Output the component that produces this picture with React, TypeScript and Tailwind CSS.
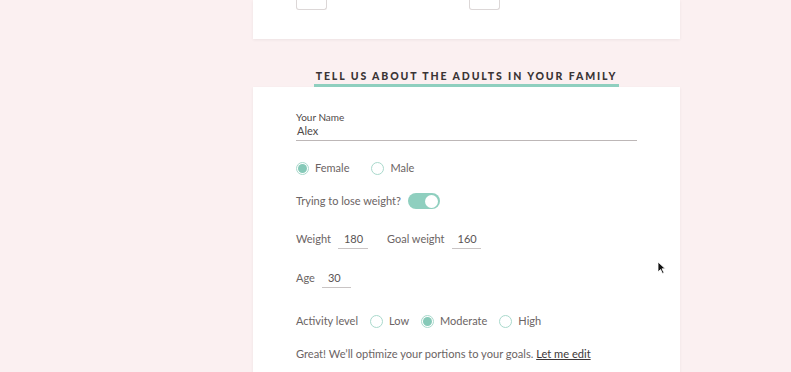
import React from "react";

const font = { fontFamily: "Lato, 'Open Sans', Arial, sans-serif" };

function Radio({ checked, label }: { checked?: boolean; label: string }) {
  return (
    <div className="flex items-center gap-[6px]">
      <span className="w-[13px] h-[13px] rounded-full border border-[#a9d9cc] bg-white flex items-center justify-center">
        {checked && <span className="w-[9px] h-[9px] rounded-full bg-[#86c9b8]" />}
      </span>
      <span className="leading-[14px]">{label}</span>
    </div>
  );
}

function SmallInput({ value, w }: { value: string; w: string }) {
  return (
    <div className={`${w} border-b border-[#c9c4c4] pb-[2px] pl-[6px] leading-[14px] text-[#5a5454]`}>{value}</div>
  );
}

export default function App() {
  return (
    <div style={font} className="relative h-[372px] w-[791px] overflow-hidden bg-[#fbf0f1] text-[11px] text-[#6b6464]">
      {/* previous card */}
      <div className="ml-[253px] w-[427px] h-[39px] bg-white shadow-[0_1px_3px_rgba(0,0,0,0.06)] flex pl-[43px]">
        <div className="w-[31px] h-[10px] border border-t-0 border-[#dcd7d7] rounded-b-[3px]" />
        <div className="ml-[142px] w-[31px] h-[10px] border border-t-0 border-[#dcd7d7] rounded-b-[3px]" />
      </div>

      {/* heading */}
      <div className="ml-[253px] w-[427px] flex justify-center mt-[31px]">
        <div className="border-b-[3px] border-[#8fcfbf] px-[2px] pb-[2px]">
          <h2 className="text-[10.5px] leading-[12px] font-black tracking-[0.18em] text-[#3a3435] whitespace-nowrap">
            TELL US ABOUT THE ADULTS IN YOUR FAMILY
          </h2>
        </div>
      </div>

      {/* form card */}
      <div className="ml-[253px] w-[427px] h-[300px] bg-white shadow-[0_1px_3px_rgba(0,0,0,0.06)] px-[43px] pt-[24px] flex flex-col">
        <div className="text-[10px] leading-[12px] text-[#4f4949]">Your Name</div>
        <div className="mt-[1px] border-b border-[#bdb7b7] pb-[2px] leading-[14px] text-[#4f4949] pl-[1px]">Alex</div>

        <div className="mt-[20px] flex items-center gap-[22px]">
          <Radio checked label="Female" />
          <Radio label="Male" />
        </div>

        <div className="mt-[18px] flex items-center gap-[7px]">
          <span className="leading-[14px]">Trying to lose weight?</span>
          <span className="w-[32px] h-[16px] rounded-full bg-[#8fcfbf] flex items-center justify-end pr-[2px]">
            <span className="w-[13px] h-[13px] rounded-full bg-white" />
          </span>
        </div>

        <div className="mt-[23px] flex items-start">
          <span className="leading-[14px]">Weight</span>
          <div className="ml-[7px]">
            <SmallInput value="180" w="w-[30px]" />
          </div>
          <span className="ml-[19px] leading-[14px]">Goal weight</span>
          <div className="ml-[7px]">
            <SmallInput value="160" w="w-[29px]" />
          </div>
        </div>

        <div className="mt-[22px] flex items-start">
          <span className="leading-[14px]">Age</span>
          <div className="ml-[7px]">
            <SmallInput value="30" w="w-[29px]" />
          </div>
        </div>

        <div className="mt-[26px] flex items-center gap-[12px]">
          <span className="leading-[14px]">Activity level</span>
          <Radio label="Low" />
          <Radio checked label="Moderate" />
          <Radio label="High" />
        </div>

        <div className="mt-[19px] leading-[14px] text-[11.1px]">
          Great! We’ll optimize your portions to your goals.{" "}
          <span className="underline text-[#3d3838]">Let me edit</span>
        </div>
      </div>

      {/* mouse cursor */}
      <svg className="absolute left-[657px] top-[261px]" width="9" height="13" viewBox="0 0 9 13">
        <path d="M1 1 L1 11 L3.5 8.5 L5.5 12.5 L7 11.8 L5 7.8 L8.3 7.8 Z" fill="#111" stroke="#fff" strokeWidth="0.8" />
      </svg>
    </div>
  );
}
